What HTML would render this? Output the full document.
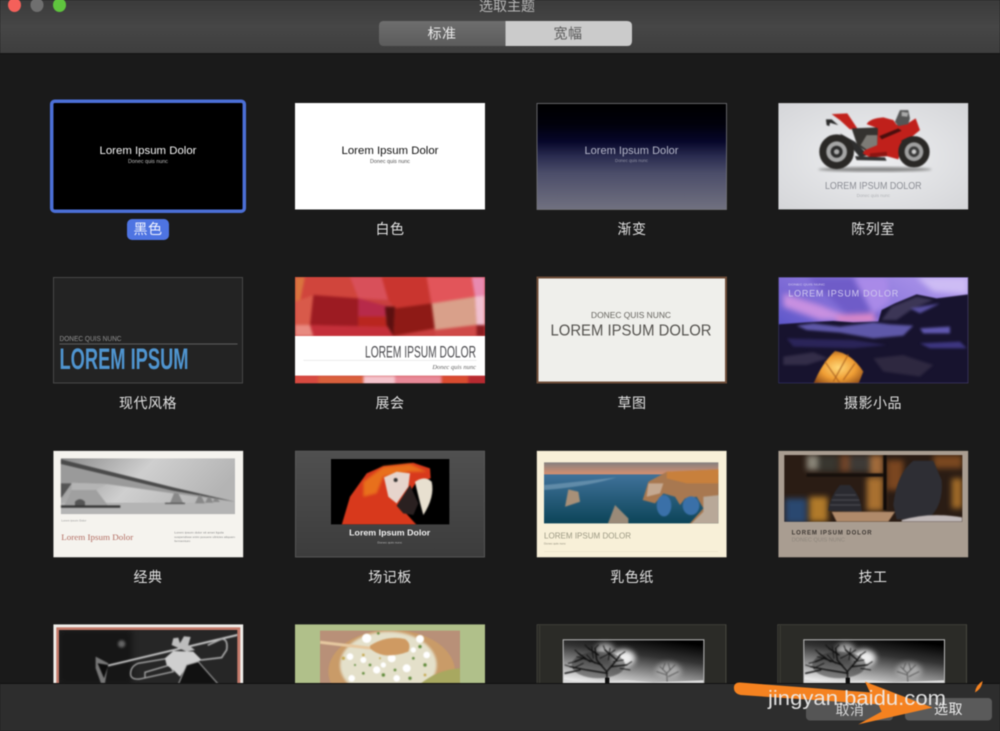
<!DOCTYPE html>
<html lang="zh">
<head>
<meta charset="utf-8">
<title>选取主题</title>
<style>
html,body{margin:0;padding:0;background:#1a1a1a;width:1000px;height:731px;overflow:hidden}
svg{display:block}
text{font-family:"Liberation Sans","Noto Sans CJK SC",sans-serif}
.lb{font-size:14px;fill:#e2e2e2;text-anchor:middle;letter-spacing:.5px}
.n{font-family:"Liberation Sans Narrow","Liberation Sans",sans-serif}
.s{font-family:"Liberation Serif",serif}
</style>
</head>
<body>
<svg width="1000" height="731" viewBox="0 0 1000 731" xmlns="http://www.w3.org/2000/svg">
<defs>
<linearGradient id="tb" x1="0" y1="0" x2="0" y2="1"><stop offset="0" stop-color="#3b3b3b"/><stop offset=".5" stop-color="#464646"/><stop offset="1" stop-color="#3e3e3e"/></linearGradient>
<linearGradient id="segL" x1="0" y1="0" x2="0" y2="1"><stop offset="0" stop-color="#6e6e6e"/><stop offset="1" stop-color="#5c5c5c"/></linearGradient>
<linearGradient id="grad" x1="0" y1="0" x2="0" y2="1"><stop offset="0" stop-color="#000"/><stop offset=".2" stop-color="#01010c"/><stop offset=".36" stop-color="#07072a"/><stop offset=".5" stop-color="#2a2c50"/><stop offset=".66" stop-color="#4c4e6a"/><stop offset="1" stop-color="#717180"/></linearGradient>
<radialGradient id="moto" cx=".5" cy=".5" r=".7"><stop offset="0" stop-color="#eeeff1"/><stop offset="1" stop-color="#d5d6d9"/></radialGradient>
<linearGradient id="sky" x1="0" y1="1" x2="1" y2="0"><stop offset="0" stop-color="#2c3cb8"/><stop offset=".45" stop-color="#7a68d4"/><stop offset="1" stop-color="#b49cee"/></linearGradient>
<radialGradient id="tent" cx=".5" cy=".5" r=".62"><stop offset="0" stop-color="#ffd878"/><stop offset=".55" stop-color="#ef9d34"/><stop offset="1" stop-color="#8e4c18"/></radialGradient>
<linearGradient id="bsky" x1="0" y1="0" x2="1" y2=".3"><stop offset="0" stop-color="#8a8a8a"/><stop offset=".5" stop-color="#cfcfcf"/><stop offset="1" stop-color="#b4b4b4"/></linearGradient>
<linearGradient id="board" x1="0" y1="0" x2="0" y2="1"><stop offset="0" stop-color="#505050"/><stop offset="1" stop-color="#3c3c3c"/></linearGradient>
<linearGradient id="csky" x1="0" y1="0" x2="0" y2="1"><stop offset="0" stop-color="#85807f"/><stop offset="1" stop-color="#d89070"/></linearGradient>
<linearGradient id="sea" x1="0" y1="0" x2="0" y2="1"><stop offset="0" stop-color="#40729a"/><stop offset="1" stop-color="#0c4458"/></linearGradient>
<linearGradient id="bw" x1=".75" y1="0" x2=".3" y2="1"><stop offset="0" stop-color="#000"/><stop offset=".35" stop-color="#333"/><stop offset="1" stop-color="#e8e8e8"/></linearGradient>
<filter id="b8" x="-40%" y="-40%" width="180%" height="180%" color-interpolation-filters="sRGB"><feGaussianBlur stdDeviation="9"/></filter>
<filter id="b3" x="-25%" y="-25%" width="150%" height="150%" color-interpolation-filters="sRGB"><feGaussianBlur stdDeviation="4"/></filter>
<filter id="b1" x="-15%" y="-15%" width="130%" height="130%" color-interpolation-filters="sRGB"><feGaussianBlur stdDeviation="1.8"/></filter>
<filter id="all" x="0" y="0" width="100%" height="100%" color-interpolation-filters="sRGB"><feGaussianBlur stdDeviation=".4"/></filter>
<g id="tree">
<rect x="128" y="73" width="425" height="135" fill="#bbb"/>
<rect x="131" y="76" width="419" height="132" fill="url(#bw)"/>
<ellipse cx="310" cy="130" rx="36" ry="26" fill="#eee" filter="url(#b8)"/>
<ellipse cx="255" cy="105" rx="28" ry="20" fill="#aaa" filter="url(#b8)"/>
<ellipse cx="445" cy="170" rx="38" ry="26" fill="#aaa" filter="url(#b8)"/>
<g filter="url(#b1)">
<ellipse cx="235" cy="150" rx="80" ry="40" fill="#222" opacity=".45"/>
<g fill="none" stroke="#0c0c0c" stroke-linecap="round">
<path d="M262 208 L260 170 L230 135 L225 100 M260 170 L290 135 L300 120 M245 150 L190 130 L165 140 M210 140 L175 115 M262 175 L200 165 L150 155 M275 155 L320 150 M290 135 L255 105 M235 120 L205 100 M180 165 L135 175" stroke-width="4"/>
<path d="M205 100 L195 90 M225 100 L235 90 M255 105 L250 92 M300 120 L315 110 M320 150 L335 140 M165 140 L145 145 M175 115 L165 105 M190 130 L170 125 M150 155 L135 150 M240 130 L270 115 M270 115 L285 105 M200 120 L225 145 M160 160 L190 145 M280 140 L310 135 M300 160 L330 165 M215 95 L220 130 M270 100 L265 135" stroke-width="2.5"/>
</g>
<g fill="none" stroke="#4c4c4c" stroke-linecap="round">
<path d="M442 208 L440 175 L420 155 M440 175 L465 150 M440 180 L410 170 M445 185 L475 170 M428 163 L435 145 M450 165 L445 145" stroke-width="2.4"/>
</g>
</g>
<path d="M131 208 L131 192 L160 198 L230 200 L320 195 L400 202 L550 196 L550 208 Z" fill="#dcdcdc"/>
<rect x="255" y="188" width="13" height="20" fill="#0c0c0c"/>
</g>
</defs>

<rect width="1000" height="731" fill="#1a1a1a"/>
<g filter="url(#all)">

<!-- Row 1 -->
<rect x="51.7" y="101.2" width="192.6" height="110" rx="3" fill="#000" stroke="#4b6fd6" stroke-width="3.5"/>
<text x="148" y="154" font-size="11" fill="#f4f4f4" text-anchor="middle" textLength="97" lengthAdjust="spacingAndGlyphs">Lorem Ipsum Dolor</text>
<text x="148" y="163" font-size="5" fill="#bbb" text-anchor="middle" textLength="40" lengthAdjust="spacingAndGlyphs">Donec quis nunc</text>
<rect x="127" y="219" width="42" height="21" rx="5" fill="#4e74e2"/>
<text x="148" y="234" class="lb" style="fill:#f2f4ff">黑色</text>

<rect x="295" y="103" width="190" height="106.5" fill="#fff"/>
<text x="390" y="154" font-size="11" fill="#111" text-anchor="middle" textLength="97" lengthAdjust="spacingAndGlyphs">Lorem Ipsum Dolor</text>
<text x="390" y="163" font-size="5" fill="#555" text-anchor="middle" textLength="40" lengthAdjust="spacingAndGlyphs">Donec quis nunc</text>
<text x="390" y="234" class="lb">白色</text>

<rect x="537" y="103.5" width="189.5" height="106" fill="url(#grad)" stroke="#77777c" stroke-width=".8"/>
<text x="631.5" y="154" font-size="11" fill="#b4b6c8" text-anchor="middle" textLength="94" lengthAdjust="spacingAndGlyphs">Lorem Ipsum Dolor</text>
<text x="631.5" y="162" font-size="4.5" fill="#8f91a3" text-anchor="middle" textLength="33" lengthAdjust="spacingAndGlyphs">Donec quis nunc</text>
<text x="632" y="234" class="lb">渐变</text>

<svg x="778.3" y="103" width="190" height="106.5" viewBox="775 39 570 319">
<rect x="775" y="39" width="570" height="319" fill="url(#moto)"/>
<ellipse cx="1065" cy="238" rx="170" ry="7" fill="#888" filter="url(#b3)"/>
<g filter="url(#b1)">
<g transform="translate(750 30)">
<path d="M168 58 L185 58 L205 75 L180 68 L178 78 L170 75 Z" fill="#2a2a2a"/>
<path d="M185 42 L232 40 L262 85 L240 88 L210 60 Z" fill="#c2221c"/>
<path d="M210 100 L255 125 L295 165 L270 172 L235 130 Z" fill="#2e2e2e"/>
<path d="M245 85 L325 82 L328 150 L290 155 L262 135 Z" fill="#34322f"/>
<path d="M290 105 L322 105 L322 148 L292 150 L272 135 Z" fill="#7d7b76"/>
<path d="M290 72 Q300 55 340 52 L370 60 L380 74 L410 72 L437 55 L450 90 L420 115 L398 132 L385 178 L350 168 L300 172 L278 160 L285 150 L322 135 L324 85 Z" fill="#c0201b"/>
<path d="M328 108 L385 85 L395 92 L335 118 Z" fill="#4a0f0e"/>
<path d="M300 160 L350 155 L352 168 L300 172 Z" fill="#8c1512"/>
<path d="M255 168 L345 172 L350 182 L260 180 Z" fill="#333"/>
<path d="M375 65 L390 30 L415 30 L420 55 L415 72 L385 78 Z" fill="#555"/>
<path d="M395 35 L415 38 L412 50 L395 48 Z" fill="#aaa"/>
<path d="M412 115 L428 160" stroke="#b09a4a" stroke-width="7" fill="none"/>
<path d="M395 125 Q430 100 470 135" fill="none" stroke="#2a2a2a" stroke-width="6"/>
<circle cx="200" cy="155" r="42" fill="#262422" stroke="#2a2826" stroke-width="20"/>
<circle cx="200" cy="155" r="31" fill="#a6a6a6"/>
<circle cx="200" cy="155" r="18" fill="#2c2c2c"/>
<circle cx="200" cy="155" r="8" fill="#aaa"/>
<circle cx="432" cy="155" r="38" fill="#262422" stroke="#2a2826" stroke-width="18"/>
<circle cx="432" cy="155" r="28" fill="#a0a0a0"/>
<circle cx="432" cy="155" r="16" fill="#3a3a3a"/>
<circle cx="432" cy="155" r="7" fill="#ccc"/>
</g>
</g>
<text x="1060" y="297" font-size="29" fill="#8c8e95" text-anchor="middle" textLength="290" lengthAdjust="spacingAndGlyphs">LOREM IPSUM DOLOR</text>
<text x="1060" y="321" font-size="13" fill="#b0b2b6" text-anchor="middle" textLength="100" lengthAdjust="spacingAndGlyphs">Donec quis nunc</text>
</svg>
<text x="873" y="234" class="lb">陈列室</text>

<!-- Row 2 -->
<rect x="53.5" y="277.5" width="189" height="105.5" fill="#232323" stroke="#484848"/>
<text x="59.5" y="341" font-size="7" fill="#909090" textLength="62" lengthAdjust="spacingAndGlyphs">DONEC QUIS NUNC</text>
<rect x="59.5" y="343.5" width="178" height="1" fill="#5e5e5e"/>
<text x="59.5" y="369" font-size="30" font-weight="bold" class="n" fill="#4f94cf" textLength="129" lengthAdjust="spacingAndGlyphs">LOREM IPSUM</text>
<text x="148" y="408" class="lb">现代风格</text>

<svg x="295" y="277" width="190" height="106.3" viewBox="795 36 570 319">
<rect x="795" y="36" width="570" height="319" fill="#c9403f"/>
<g filter="url(#b3)">
<polygon points="795,36 825,36 810,110 795,110" fill="#d9743f"/>
<polygon points="825,36 960,36 985,100 850,90 810,110" fill="#d0453c"/>
<polygon points="960,36 1055,36 1075,105 985,100" fill="#d8505a"/>
<polygon points="1055,36 1190,36 1200,115 1095,130 1075,105" fill="#c9352f"/>
<polygon points="1190,36 1325,36 1335,95 1205,115" fill="#e2555a"/>
<polygon points="1325,36 1365,36 1365,95 1335,95" fill="#e88ab0"/>
<polygon points="795,110 850,90 840,180 795,180" fill="#d85a4a"/>
<polygon points="850,90 985,100 985,185 840,180" fill="#9c1b22"/>
<polygon points="985,100 1075,125 1065,155 985,155" fill="#b72a4a"/>
<polygon points="985,155 1065,155 1080,213 985,185" fill="#b9261f"/>
<polygon points="1065,125 1095,125 1090,213 1070,180" fill="#5c1010"/>
<polygon points="1095,130 1205,115 1215,190 1090,213" fill="#8e1a16"/>
<polygon points="1205,115 1335,95 1340,180 1215,195" fill="#d9a08a"/>
<polygon points="1335,95 1365,92 1365,180 1340,180" fill="#f0c0d0"/>
<polygon points="795,180 840,180 850,213 795,213" fill="#e88a80"/>
<polygon points="840,180 1070,185 1090,213 850,213" fill="#c42f3a"/>
<polygon points="1215,195 1340,180 1340,213 1215,213" fill="#cf4a48"/>
<polygon points="1340,180 1365,180 1365,213 1340,213" fill="#8a1c20"/>
</g>
<g filter="url(#b3)">
<rect x="790" y="332" width="80" height="30" fill="#d74a40"/>
<rect x="865" y="332" width="135" height="30" fill="#d9603c"/>
<rect x="1000" y="332" width="95" height="30" fill="#f4c4cc"/>
<rect x="1095" y="332" width="140" height="30" fill="#e88a98"/>
<rect x="1235" y="332" width="80" height="30" fill="#d94c30"/>
<rect x="1315" y="332" width="55" height="30" fill="#b72a30"/>
</g>
<rect x="795" y="213" width="570" height="119" fill="#fff"/>
<rect x="820" y="285" width="520" height="2" fill="#e3e3e3"/>
<text x="1338" y="277" font-size="49" class="n" fill="#4c4c50" text-anchor="end" textLength="333" lengthAdjust="spacingAndGlyphs">LOREM IPSUM DOLOR</text>
<text x="1338" y="312" font-size="20" class="s" font-style="italic" fill="#666" text-anchor="end" textLength="131" lengthAdjust="spacingAndGlyphs">Donec quis nunc</text>
</svg>
<text x="390" y="408" class="lb">展会</text>

<rect x="537.5" y="277.5" width="188.5" height="105" fill="#efefeb" stroke="#6d4c38" stroke-width="2"/>
<text x="631" y="318" font-size="8" fill="#66645f" text-anchor="middle" textLength="80" lengthAdjust="spacingAndGlyphs">DONEC QUIS NUNC</text>
<text x="631" y="335.5" font-size="15.5" fill="#55534f" text-anchor="middle" textLength="161" lengthAdjust="spacingAndGlyphs">LOREM IPSUM DOLOR</text>
<text x="632" y="408" class="lb">草图</text>

<svg x="778.3" y="277" width="190" height="106.3" viewBox="775 36 570 319">
<rect x="775" y="36" width="570" height="319" fill="url(#sky)"/>
<g filter="url(#b8)">
<polygon points="860,36 1000,36 1090,160 1000,165" fill="#6f5cc8"/>
<polygon points="790,85 900,120 1010,165 900,165 790,125" fill="#c890e0"/>
<polygon points="1000,36 1100,36 1110,110 1060,150" fill="#a98ae8"/>
<polygon points="1190,36 1345,36 1345,88 1240,80" fill="#cdbcf4"/>
<polygon points="950,150 1060,145 1070,172 950,172" fill="#e08ac8"/>
</g>
<path d="M775 178 L860 172 L940 168 L1000 172 L1075 170 L1085 135 L1125 115 L1190 88 L1250 100 L1345 88 L1345 355 L775 355 Z" fill="#17132e" filter="url(#b1)"/>
<g filter="url(#b3)">
<path d="M1085 165 L1115 125 L1190 95 L1240 105 L1180 130 L1130 165 Z" fill="#3c3656"/>
<path d="M830 182 L880 175 L960 185 L1060 172 L1110 178 L1180 182 L1150 212 L1060 220 L960 203 L860 195 Z" fill="#5e58a8"/>
<path d="M1200 190 L1290 185 L1290 205 L1210 205 Z" fill="#6058b0"/>
<path d="M1170 130 L1260 115 L1200 145 Z" fill="#5850a0"/>
<path d="M1200 235 L1320 230 L1340 250 L1230 250 Z" fill="#3d3680"/>
<path d="M800 220 L1000 225 L1100 240 L1000 250 L820 245 Z" fill="#2a2458"/>
<path d="M1060 280 L1150 270 L1240 300 L1200 335 L1090 320 Z" fill="#2e2840"/>
<path d="M790 275 L880 262 L925 280 L860 300 L790 300 Z" fill="#332d48"/>
</g>
<path d="M880 358 Q905 295 945 258 Q995 265 1030 320 L1015 358 Z" fill="url(#tent)" filter="url(#b1)"/>
<path d="M915 290 L960 355 M985 268 L940 350 M1005 295 L970 345" stroke="#a86020" stroke-width="3" fill="none" filter="url(#b1)"/>
<text x="805" y="61" font-size="9" fill="#d4cfee" textLength="110" lengthAdjust="spacingAndGlyphs">DONEC QUIS NUNC</text>
<text x="805" y="95" font-size="27" fill="#d0c8ee" textLength="330" lengthAdjust="spacing">LOREM IPSUM DOLOR</text>
<rect x="775.5" y="36.5" width="569" height="318" fill="none" stroke="#3a3658" stroke-width="2"/>
</svg>
<text x="873" y="408" class="lb">摄影小品</text>

<!-- Row 3 -->
<svg x="53.3" y="450.7" width="190" height="106.7" viewBox="70 32 570 320">
<rect x="70" y="32" width="570" height="320" fill="#f5f3ee"/>
<rect x="93" y="55" width="522" height="167" fill="url(#bsky)"/>
<rect x="93" y="188" width="522" height="34" fill="#b4b4b4"/>
<g filter="url(#b1)">
<polygon points="93,60 430,148 615,185 430,160 230,132 125,128 93,130" fill="#9a9a9a"/>
<polygon points="93,58 430,142 615,185 430,152 93,72" fill="#4a4a4a"/>
<polygon points="93,130 125,130 95,172 93,172" fill="#555"/>
<polygon points="100,203 125,150 195,145 235,198" fill="#a0a0a0"/>
<polygon points="125,128 230,132 195,150 125,150" fill="#b4b4b4"/>
<path d="M135 198 V185 Q150 170 165 185 V198 Z" fill="#555"/>
<polygon points="420,190 432,160 445,160 460,190" fill="#888"/>
<polygon points="495,190 507,165 512,165 525,190" fill="#888"/>
<polygon points="525,188 535,170 540,170 550,188" fill="#888"/>
<polygon points="548,186 555,174 560,174 570,186" fill="#888"/>
<rect x="93" y="196" width="178" height="7" fill="#333"/>
<rect x="405" y="188" width="60" height="4" fill="#555"/>
</g>
<text x="94" y="244" font-size="8" fill="#999" textLength="75" lengthAdjust="spacingAndGlyphs">Lorem ipsum Dolor</text>
<text x="94" y="300" font-size="26" class="s" fill="#b36e64" textLength="216" lengthAdjust="spacingAndGlyphs">Lorem Ipsum Dolor</text>
<g font-size="8" fill="#888">
<text x="433" y="281" textLength="148" lengthAdjust="spacingAndGlyphs">Lorem ipsum dolor sit amet ligula</text>
<text x="433" y="294" textLength="182" lengthAdjust="spacingAndGlyphs">suspendisse enim posuere ultricies aliquam</text>
<text x="433" y="306" textLength="48" lengthAdjust="spacingAndGlyphs">fermentum</text>
</g>
</svg>
<text x="148" y="582" class="lb">经典</text>

<svg x="295" y="450.7" width="190" height="106.7" viewBox="795 32 570 320">
<rect x="795" y="32" width="570" height="320" fill="url(#board)"/>
<rect x="796" y="33" width="568" height="318" fill="none" stroke="#5c5c5c" stroke-width="3"/>
<rect x="903" y="57" width="355" height="196" fill="#000"/>
<svg x="903" y="57" width="355" height="196" viewBox="903 57 355 196">
<g filter="url(#b1)">
<path d="M935 255 L960 170 L1010 100 L1060 78 L1150 68 L1200 85 L1202 115 L1160 125 L1110 200 L1160 255 Z" fill="#d8391c"/>
<g filter="url(#b3)"><path d="M1000 125 L1060 80 L1140 72 L1190 95 L1140 95 L1060 110 L1040 160 L1000 170 Z" fill="#e8701c"/></g>
<path d="M1062 112 L1100 95 L1140 100 L1135 140 L1100 190 L1075 170 Z" fill="#e6d4cc"/>
<path d="M1100 197 L1140 135 L1165 190 L1150 225 L1120 220 Z" fill="#2a2020"/>
<path d="M1155 125 Q1185 105 1205 125 Q1215 170 1180 225 Q1165 170 1155 125 Z" fill="#e8e0d0"/>
<circle cx="1097" cy="120" r="6" fill="#333"/>
</g>
</svg>
<text x="1079" y="287" font-size="24" font-weight="bold" fill="#f2f2f2" text-anchor="middle" textLength="243" lengthAdjust="spacingAndGlyphs">Lorem Ipsum Dolor</text>
<text x="1079" y="310" font-size="9" fill="#bbb" text-anchor="middle" textLength="74" lengthAdjust="spacingAndGlyphs">Donec quis nunc</text>
</svg>
<text x="390" y="582" class="lb">场记板</text>

<svg x="536.7" y="450.7" width="190" height="106.7" viewBox="50 32 570 320">
<rect x="50" y="32" width="570" height="320" fill="#f8f0d8"/>
<rect x="72" y="67" width="523" height="37" fill="url(#csky)"/>
<rect x="72" y="103" width="523" height="147" fill="url(#sea)"/>
<svg x="72" y="67" width="523" height="183" viewBox="72 67 523 183">
<g filter="url(#b1)">
<path d="M72 135 Q180 125 290 112 Q200 140 72 150 Z" fill="#7fa4bd" opacity=".6"/>
<path d="M368 180 L385 125 L440 95 L600 88 L600 255 L505 255 L550 205 L530 170 L495 175 L480 195 L465 170 L430 160 L405 190 Z" fill="#a87850"/>
<path d="M440 95 L600 88 L600 130 L500 130 L440 115 Z" fill="#c8803c"/>
<path d="M385 130 L430 130 L420 160 L380 170 Z" fill="#c4a890"/>
<path d="M550 170 L600 165 L600 255 L510 255 L550 215 Z" fill="#b8a898"/>
<ellipse cx="432" cy="197" rx="22" ry="32" fill="#3a70a8"/>
<ellipse cx="513" cy="197" rx="25" ry="28" fill="#3a70a8"/>
<path d="M135 200 L145 148 L175 155 L180 185 Z" fill="#a89078"/>
<path d="M262 255 L285 195 L325 235 L325 255 Z" fill="#9a8a78"/>
</g>
</svg>
<text x="72" y="295" font-size="24" fill="#9c9984" textLength="261" lengthAdjust="spacingAndGlyphs">LOREM IPSUM DOLOR</text>
<text x="72" y="313" font-size="9" fill="#8e8b78" textLength="65" lengthAdjust="spacingAndGlyphs">Donec quis nunc</text>
<rect x="72" y="334" width="523" height="1.5" fill="#e6dec4"/>
</svg>
<text x="632" y="582" class="lb">乳色纸</text>

<svg x="778.3" y="450.7" width="190" height="106.7" viewBox="775 32 570 320">
<rect x="775" y="32" width="570" height="320" fill="#a99d91"/>
<rect x="793" y="45" width="534" height="200" fill="#2a1c14"/>
<svg x="793" y="45" width="534" height="200" viewBox="793 45 534 200">
<g filter="url(#b8)">
<rect x="860" y="45" width="35" height="45" fill="#8a8578"/>
<rect x="895" y="45" width="60" height="50" fill="#38362f"/>
<rect x="960" y="45" width="30" height="50" fill="#70452a"/>
<rect x="990" y="45" width="60" height="50" fill="#3e3a36"/>
<rect x="1050" y="45" width="40" height="60" fill="#a06a3a"/>
<rect x="1100" y="60" width="50" height="90" fill="#7a4620"/>
<rect x="1040" y="112" width="50" height="100" fill="#a87030"/>
<rect x="795" y="175" width="65" height="75" fill="#2a4870"/>
<rect x="868" y="170" width="55" height="75" fill="#b07a2a"/>
<rect x="1295" y="115" width="32" height="90" fill="#a06a28"/>
<rect x="1240" y="45" width="87" height="40" fill="#7a4820"/>
</g>
<g filter="url(#b1)">
<rect x="860" y="100" width="230" height="10" fill="#17100c"/>
<rect x="1090" y="45" width="10" height="165" fill="#0f0a08"/>
<path d="M1120 195 Q1130 100 1180 62 L1240 62 L1265 120 Q1272 200 1222 238 L1130 238 Z" fill="#2e2e34"/>
<path d="M925 212 Q930 170 960 135 L990 135 Q1025 170 1025 215 Z" fill="#2a2a30"/>
<path d="M935 180 H1018 M930 195 H1022 M945 165 H1008" stroke="#4c4c52" stroke-width="3"/>
<path d="M935 215 L1125 215 L1105 245 L950 245 Z" fill="#b08a6a"/>
<path d="M1145 240 Q1230 215 1327 232 L1327 245 L1145 245 Z" fill="#c0b8b8"/>
</g>
</svg>
<text x="815" y="283" font-size="18" font-weight="bold" fill="#3e3833" textLength="240" lengthAdjust="spacing">LOREM IPSUM DOLOR</text>
<text x="815" y="305" font-size="15" fill="#8e867c" textLength="160" lengthAdjust="spacingAndGlyphs">DONEC QUIS NUNC</text>
</svg>
<text x="873" y="582" class="lb">技工</text>

<!-- Row 4 -->
<svg x="53.3" y="624.3" width="190" height="60" viewBox="70 28 570 180">
<rect x="70" y="28" width="570" height="180" fill="#f0eeea"/>
<rect x="79" y="37" width="552" height="171" fill="#c4796a"/>
<rect x="87" y="45" width="535" height="163" fill="#262626"/>
<svg x="87" y="45" width="535" height="163" viewBox="87 45 535 163">
<rect x="87" y="45" width="220" height="163" fill="#161616" filter="url(#b8)"/>
<circle cx="275" cy="87" r="11" fill="#666" filter="url(#b3)"/>
<g filter="url(#b1)">
<g fill="none" stroke-linecap="round">
<path d="M235 152 L622 60" stroke="#c8c8c8" stroke-width="6"/>
<path d="M235 155 L622 64" stroke="#444" stroke-width="2"/>
<path d="M535 90 L575 72 Q595 72 590 105 L575 128 L515 135" stroke="#aaa" stroke-width="5"/>
<path d="M415 130 L325 145 Q300 155 302 180 Q305 195 330 192 L430 170 L420 150 L345 172 L345 188" stroke="#a8a8a8" stroke-width="4"/>
</g>
<path d="M197 125 L235 145 L225 205 L213 205 L197 160 Z" fill="#777"/>
<path d="M203 145 L235 150 L222 190 Z" fill="#0c0c0c"/>
<path d="M425 90 L430 70 L445 68 L450 85 L462 64 L482 66 L475 90 L495 105 L470 110 Z" fill="#bdbdbd"/>
<path d="M405 130 L430 108 L490 110 L515 135 L470 155 L450 185 L430 165 L410 150 Z" fill="#cfcfcf"/>
<path d="M445 208 L470 150 L505 140 L565 208 Z" fill="#111" stroke="#aaa" stroke-width="3"/>
</g>
</svg>
</svg>

<svg x="295" y="624.3" width="190" height="60" viewBox="795 28 570 180">
<rect x="795" y="28" width="570" height="180" fill="#b0c08a"/>
<rect x="870" y="47" width="420" height="161" fill="#b89078"/>
<svg x="870" y="47" width="420" height="161" viewBox="870 47 420 161">
<ellipse cx="1085" cy="170" rx="190" ry="125" fill="#c99b68" filter="url(#b1)"/>
<ellipse cx="1075" cy="150" rx="145" ry="100" fill="#e4e0ca" filter="url(#b3)"/>
<g filter="url(#b1)">
<g fill="#fff">
<circle cx="1010" cy="70" r="14"/><circle cx="1170" cy="72" r="12"/><circle cx="960" cy="125" r="10"/><circle cx="1085" cy="130" r="12"/><circle cx="1130" cy="160" r="12"/><circle cx="1040" cy="165" r="11"/><circle cx="965" cy="190" r="10"/><circle cx="1190" cy="120" r="10"/><circle cx="1000" cy="135" r="9"/><circle cx="1100" cy="190" r="10"/><circle cx="1150" cy="105" r="8"/><circle cx="1060" cy="150" r="8"/>
</g>
<g fill="#5f8a3a">
<circle cx="1045" cy="55" r="4"/><circle cx="1170" cy="95" r="5"/><circle cx="1100" cy="105" r="4"/><circle cx="1020" cy="150" r="4"/><circle cx="1060" cy="180" r="5"/><circle cx="1095" cy="165" r="4"/><circle cx="1185" cy="150" r="5"/><circle cx="1000" cy="175" r="4"/><circle cx="1150" cy="130" r="4"/><circle cx="1140" cy="190" r="5"/><circle cx="975" cy="150" r="3"/>
</g>
<g fill="#c4a850">
<circle cx="940" cy="130" r="5"/><circle cx="1000" cy="120" r="4"/><circle cx="1185" cy="180" r="4"/><circle cx="1050" cy="130" r="3"/>
</g>
<path d="M870 82 L1025 100" stroke="#e6c8a0" stroke-width="9" fill="none"/>
<path d="M1020 92 Q1070 60 1125 72 Q1145 85 1135 110 Q1095 125 1060 120 Q1035 115 1020 100 Z" fill="#cf9a62"/>
<path d="M1170 208 Q1220 165 1290 160 L1292 210 Z" fill="#a8a860"/>
</g>
</svg>
</svg>

<svg x="536.7" y="624.3" width="190" height="60" viewBox="50 28 570 180">
<rect x="50" y="28" width="570" height="180" fill="#2b2b27"/>
<rect x="50.5" y="28.5" width="567" height="200" fill="none" stroke="#55554c" stroke-width="2"/>
<rect x="58" y="31" width="2" height="177" fill="#44443c"/>
<use href="#tree"/>
</svg>
<svg x="777.3" y="624.3" width="190" height="60" viewBox="50 28 570 180">
<rect x="50" y="28" width="570" height="180" fill="#2b2b27"/>
<rect x="50.5" y="28.5" width="567" height="200" fill="none" stroke="#55554c" stroke-width="2"/>
<rect x="58" y="31" width="2" height="177" fill="#44443c"/>
<use href="#tree"/>
</svg>

<!-- Title bar -->
<rect width="1000" height="53" fill="url(#tb)"/>
<rect y="53" width="1000" height="1.5" fill="#161616"/>
<ellipse cx="14.5" cy="5" rx="6.5" ry="7" fill="#f4605a"/>
<ellipse cx="37" cy="5" rx="6.5" ry="7" fill="#6f6f6f"/>
<ellipse cx="59.5" cy="5" rx="6.5" ry="7" fill="#5fc43e"/>
<text x="507" y="11" font-size="14" fill="#b8b8b8" text-anchor="middle">选取主题</text>
<path d="M384 21 H505.5 V46 H384 Q379 46 379 41 V26 Q379 21 384 21 Z" fill="url(#segL)"/>
<path d="M505.5 21 H627 Q632 21 632 26 V41 Q632 46 627 46 H505.5 Z" fill="#cbcbcb"/>
<text x="442" y="38.5" font-size="14" fill="#ececec" text-anchor="middle" letter-spacing=".5">标准</text>
<text x="568" y="38.5" font-size="14" fill="#5a5a5a" text-anchor="middle" letter-spacing=".5">宽幅</text>

<!-- Bottom bar -->
<rect y="683.5" width="1000" height="47.5" fill="#2d2d2d"/>
<rect y="683" width="1000" height="1" fill="#111"/>
<rect x="806" y="698" width="87" height="22.5" rx="4" fill="#555"/>
<rect x="905" y="698" width="87" height="22.5" rx="4" fill="#5a5a5a"/>
<text x="850" y="715" font-size="14" fill="#d6d6d6" text-anchor="middle" letter-spacing=".5">取消</text>
<text x="948.5" y="714" font-size="14" fill="#ececec" text-anchor="middle" letter-spacing=".5">选取</text>

<!-- Orange annotation -->
<g transform="translate(520 615) scale(.3333)">
<path d="M642 215 Q645 200 665 203 L1050 232 L1035 200 L1238 278 L1015 328 L1085 290 L1075 268 L662 240 Q640 235 642 215 Z" fill="#f58220"/>
<path d="M1365 232 Q1368 210 1388 198 Q1385 222 1365 232 Z" fill="#f58220"/>
</g>
<text x="768" y="705" font-size="20" fill="#eeeeee" fill-opacity=".92" textLength="178" lengthAdjust="spacingAndGlyphs">jingyan.baidu.com</text>

</g>
</svg>
</body>
</html>
